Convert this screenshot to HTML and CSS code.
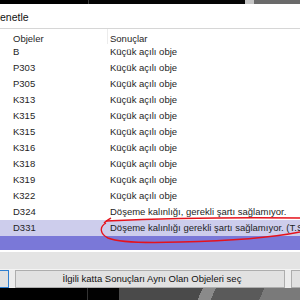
FILE: index.html
```html
<!DOCTYPE html>
<html lang="tr">
<head>
  <meta charset="UTF-8">
  <title>Denetle</title>
  <link rel="stylesheet" href="styles.css">
</head>
<body>

  <div class="topbar">
    <div class="tb-dark"></div>
    <div class="tb-dark2"></div>
    <div class="tb-light"></div>
    <div class="tb-grey"></div>
  </div>

  <div class="titlebar">enetle</div>

  <div class="list">
    <div class="row header">
      <div class="col1">Objeler</div>
      <div class="col2">Sonuçlar</div>
    </div>
    <div class="row"><div class="col1">B</div><div class="col2">Küçük açılı obje</div></div>
    <div class="row"><div class="col1">P303</div><div class="col2">Küçük açılı obje</div></div>
    <div class="row"><div class="col1">P305</div><div class="col2">Küçük açılı obje</div></div>
    <div class="row"><div class="col1">K313</div><div class="col2">Küçük açılı obje</div></div>
    <div class="row"><div class="col1">K315</div><div class="col2">Küçük açılı obje</div></div>
    <div class="row"><div class="col1">K315</div><div class="col2">Küçük açılı obje</div></div>
    <div class="row"><div class="col1">K316</div><div class="col2">Küçük açılı obje</div></div>
    <div class="row"><div class="col1">K318</div><div class="col2">Küçük açılı obje</div></div>
    <div class="row"><div class="col1">K319</div><div class="col2">Küçük açılı obje</div></div>
    <div class="row"><div class="col1">K322</div><div class="col2">Küçük açılı obje</div></div>
    <div class="row"><div class="col1">D324</div><div class="col2">Döşeme kalınlığı, gerekli şartı sağlamıyor.</div></div>
    <div class="row selected"><div class="col1">D331</div><div class="col2">Döşeme kalınlığı gerekli şartı sağlamıyor. (T.S.500)</div></div>
    <div class="row active"></div>

    <svg class="mark" width="300" height="40" viewBox="0 205 300 40">
      <path d="M111 218 C108 220, 106 221, 104 223" />
      <path d="M106 221 C150 219, 220 217, 300 218" />
      <path d="M106 223 C99 227, 100 234, 108 238 C120 243, 150 243, 180 242 C230 241, 270 238, 300 232" />
    </svg>
  </div>

  <div class="band"></div>

  <div class="buttons">
    <div class="btn btn-focus"></div>
    <div class="btn btn-main">İlgili katta Sonuçları Aynı Olan Objeleri seç</div>
    <div class="btn btn-side"></div>
  </div>

  <div class="desktop">
    <div class="dk-black"></div>
    <div class="dk-grey"></div>
  </div>

</body>
</html>
```

FILE: styles.css
```css
body {
  margin: 0;
  width: 300px;
  height: 300px;
  overflow: hidden;
  background: #fff;
  font-family: "Liberation Sans", Arial, sans-serif;
  font-size: 9.5px;
  color: #1e1e1e;
}

.topbar {
  display: flex;
  height: 4px;
}

.tb-dark {
  width: 88px;
  background: #000;
  border-right: 1px solid #3a3a3a;
}

.tb-dark2 {
  width: 156px;
  background: #050505;
}

.tb-light {
  width: 9px;
  background: #c4c4c4;
}

.tb-grey {
  flex: 1;
  background: #6a6a6a;
}

.titlebar {
  height: 24px;
  line-height: 27px;
  font-size: 10.5px;
  color: #111;
  border-bottom: 1px solid #d6d6d6;
}

.list {
  position: relative;
}

.row {
  display: flex;
  height: 16px;
  line-height: 16px;
  white-space: nowrap;
}

.row.header {
  height: 15px;
  line-height: 19px;
}

.col1 {
  flex: none;
  width: 94px;
  padding-left: 13px;
}

.col2 {
  flex: 1;
  min-width: 0;
  overflow: hidden;
  padding-left: 3px;
}

.header .col2 {
  border-left: 1px solid #ececec;
  padding-left: 2px;
}

.row.selected {
  background: #cdcdec;
}

.row.active {
  height: 14px;
  background: #7a78d8;
  border-bottom: 2px solid #fff;
}

.mark {
  position: absolute;
  left: 0;
  top: 176px;
  fill: none;
  stroke: #e5121c;
  stroke-width: 1.4;
}

.band {
  height: 17px;
  background: #e4e4e4;
  border-bottom: 1px solid #f4f4f4;
}

.buttons {
  display: flex;
  gap: 6px;
  height: 18px;
  background: #ececec;
}

.btn {
  box-sizing: border-box;
  height: 18px;
  background: #e1e1e1;
  border: 1px solid #adadad;
  text-align: center;
  line-height: 16px;
  font-size: 9.5px;
  color: #111;
}

.btn-focus {
  width: 9px;
  border: 1px solid #2f7fd0;
  border-left: none;
}

.btn-main {
  width: 270px;
  padding-left: 4px;
}

.btn-side {
  flex: 1;
  border-right: none;
}

.desktop {
  display: flex;
  height: 12px;
}

.dk-black {
  width: 87px;
  background: #000;
  border-right: 1px solid #333;
  box-shadow: 31px 0 0 #020202;
  margin-right: 31px;
}

.dk-grey {
  flex: 1;
  background: linear-gradient(115deg, #4a4a4a 0, #4a4a4a 45%, #8a8a8a 45%, #8a8a8a 52%, #5a5a5a 52%, #5a5a5a 78%, #7a7a7a 78%);
}
```
